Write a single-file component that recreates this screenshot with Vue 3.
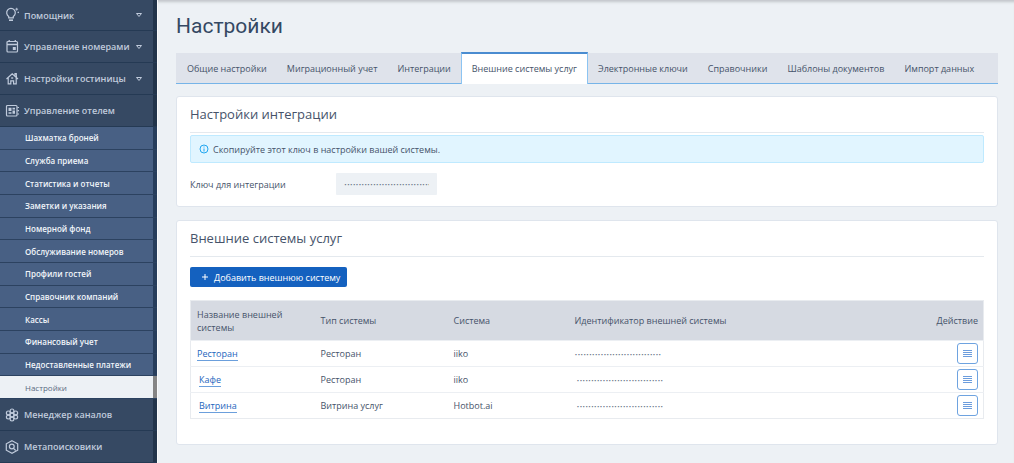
<script setup>
const topItems = [
  { label: 'Помощник', icon: 'bulb', arrow: true },
  { label: 'Управление номерами', icon: 'calendar', arrow: true },
  { label: 'Настройки гостиницы', icon: 'house', arrow: true },
  { label: 'Управление отелем', icon: 'hotel', arrow: false },
]
const subItems = [
  'Шахматка броней', 'Служба приема', 'Статистика и отчеты', 'Заметки и указания',
  'Номерной фонд', 'Обслуживание номеров', 'Профили гостей', 'Справочник компаний',
  'Кассы', 'Финансовый учет', 'Недоставленные платежи', 'Настройки',
]
const tabs = [
  'Общие настройки', 'Миграционный учет', 'Интеграции', 'Внешние системы услуг',
  'Электронные ключи', 'Справочники', 'Шаблоны документов', 'Импорт данных',
]
const activeTab = 'Внешние системы услуг'
const mask = '·'.repeat(30)
const rows = [
  { name: 'Ресторан', type: 'Ресторан', system: 'iiko', inset: false },
  { name: 'Кафе', type: 'Ресторан', system: 'iiko', inset: true },
  { name: 'Витрина', type: 'Витрина услуг', system: 'Hotbot.ai', inset: true },
]
</script>

<template>
  <div class="page">
    <nav class="sidebar">
      <button v-for="item in topItems" :key="item.label" type="button" class="item">
        <svg v-if="item.icon === 'bulb'" class="icon" viewBox="0 0 16 16">
          <path d="M4.700 10.800v-1.400a4.300 4.300 0 1 1 4.600 0v1.400z" />
          <path d="M5 13.200h4" stroke-width="1.600" />
          <path d="M12.700 .8v2.800M11.300 2.200h2.800M14.300 4.700v1.400M13.600 5.400H15" stroke-width=".9" />
        </svg>
        <svg v-else-if="item.icon === 'calendar'" class="icon" viewBox="0 0 16 16">
          <rect x="3" y="2.500" width="10.500" height="10.500" rx="1" />
          <path d="M3 5.500h10.500M5.200 1V3M11.300 1V3" stroke-width="1.300" />
          <path d="M8.800 8h3v3h-3z" class="solid" />
        </svg>
        <svg v-else-if="item.icon === 'house'" class="icon" viewBox="0 0 16 16">
          <path d="M2.500 8 8.200 2.700 14 8M4.200 7v5.800h2.600v-3h2.800v3h2.600V7M11 4.500v-2h1.300V6" />
          <path d="M7.200 6.300h2v1.400h-2z" class="solid" />
        </svg>
        <svg v-else class="icon" viewBox="0 0 16 16">
          <rect x="2.500" y="2.500" width="10.500" height="10.500" rx="1" />
          <path d="M4.500 4.700h3V8h-3zM8.500 4.700H11v1.800H8.500zM4.500 9.200h3v1.600h-3zM8.500 7.500H11v3.300H8.500z" class="solid" />
          <path d="M13.500 4.500H15M13.500 7.700H15M13.500 11H15" />
        </svg>
        <span class="label">{{ item.label }}</span>
        <svg v-if="item.arrow" class="arrow" viewBox="0 0 8 6"><path d="M1.500 1.500h5L4 4.500z" /></svg>
      </button>

      <div class="sub">
        <a v-for="label in subItems" :key="label" href="#" :class="{ current: label === 'Настройки' }">{{ label }}</a>
      </div>

      <button type="button" class="item">
        <svg class="icon" viewBox="0 0 16 16">
          <circle cx="8" cy="8" r="1.900" /><circle cx="8" cy="3.900" r="1.900" /><circle cx="8" cy="12.100" r="1.900" />
          <circle cx="4.300" cy="5.900" r="1.900" /><circle cx="11.700" cy="5.900" r="1.900" />
          <circle cx="4.300" cy="10.100" r="1.900" /><circle cx="11.700" cy="10.100" r="1.900" />
        </svg>
        <span class="label">Менеджер каналов</span>
      </button>
      <button type="button" class="item">
        <svg class="icon" viewBox="0 0 16 16">
          <path d="M8 1.700 13.700 4.800v6.400L8 14.300l-5.700-3.100V4.800z" />
          <circle cx="7.800" cy="7.500" r="2.400" /><path d="m9.500 9.300 2.200 2.200" />
        </svg>
        <span class="label">Метапоисковики</span>
      </button>
    </nav>

    <main class="main">
      <h1>Настройки</h1>
      <div class="tabs" role="tablist">
        <button v-for="tab in tabs" :key="tab" type="button" role="tab" class="tab"
          :class="{ active: tab === activeTab }" :aria-selected="tab === activeTab">{{ tab }}</button>
      </div>

      <section class="card">
        <h2>Настройки интеграции</h2>
        <div class="alert">
          <svg viewBox="0 0 10 10"><circle cx="5" cy="5" r="4" /><path d="M5 4.500v3M5 2.500v1" /></svg>
          <span>Скопируйте этот ключ в настройки вашей системы.</span>
        </div>
        <div class="field">
          <label for="key">Ключ для интеграции</label>
          <input id="key" type="text" readonly :value="mask">
        </div>
      </section>

      <section class="card systems">
        <h2>Внешние системы услуг</h2>
        <button type="button" class="add">
          <svg viewBox="0 0 8 8"><path d="M4 1v6M1 4h6" /></svg>
          <span>Добавить внешнюю систему</span>
        </button>
        <table>
          <colgroup><col class="c-name"><col class="c-type"><col class="c-system"><col><col class="c-action"></colgroup>
          <thead>
            <tr>
              <th>Название внешней системы</th><th>Тип системы</th><th>Система</th>
              <th>Идентификатор внешней системы</th><th class="action">Действие</th>
            </tr>
          </thead>
          <tbody>
            <tr v-for="row in rows" :key="row.name" :class="{ inset: row.inset }">
              <td class="name"><a href="#">{{ row.name }}</a></td>
              <td>{{ row.type }}</td>
              <td>{{ row.system }}</td>
              <td class="ident">{{ mask }}</td>
              <td class="action">
                <button type="button" class="menu" :aria-label="'Действия: ' + row.name">
                  <svg viewBox="0 0 9 9"><path d="M0 1.500h9M0 3.500h9M0 5.500h9M0 7.500h9" /></svg>
                </button>
              </td>
            </tr>
          </tbody>
        </table>
      </section>
    </main>
  </div>
</template>

<style>
body { background: #edf1f5; }
</style>

<style scoped>
* { box-sizing: border-box; }
.page {
  display: grid;
  grid-template-columns: 157px 1fr;
  min-height: 100vh;
  font-family: "Open Sans", "Noto Sans", sans-serif;
  font-size: 9px;
  line-height: 13px;
  color: #46536a;
}
button, input { font: inherit; color: inherit; margin: 0; }
svg { fill: none; stroke: currentColor; flex: none; }
.solid { fill: currentColor; stroke: none; }

.sidebar {
  background: linear-gradient(to left, #22344a 4px, #364963 4px);
  color: #c0cbdc;
}
.item {
  display: flex;
  align-items: center;
  width: 100%;
  height: 32px;
  padding: 0 14px 0 4px;
  gap: 4px;
  border: 0;
  border-bottom: 1px solid #253a54;
  background: none;
  font-weight: 600;
  text-align: left;
  white-space: nowrap;
}
.item:first-child { height: 31px; }
.icon { width: 16px; height: 16px; stroke-width: 1.2; }
.label { flex: 1; }
.arrow { width: 8px; height: 6px; }
.sub {
  display: grid;
  grid-auto-rows: 1fr;
  min-height: 272px;
  background: linear-gradient(to left, #273d5b 4px, #486084 4px);
}
.sub a {
  display: flex;
  align-items: center;
  padding-left: 25px;
  border-bottom: 1px solid #2c4260;
  color: #f1f5fa;
  font-size: 8px;
  font-weight: 600;
  text-decoration: none;
}
.sub a.current {
  background: linear-gradient(to left, #858585 4px, #edf1f5 4px);
  color: #5a6a82;
  font-weight: 400;
}

.main {
  padding: 13px 16px 18px 18px;
  border-left: 1px solid #fafbfc;
  box-shadow: inset 0 4px 3px -2px #c2c6ca;
  min-width: 0;
}
h1 {
  margin: 0 0 14px;
  font: 400 21px/26px Roboto, sans-serif;
  color: #344863;
}
.tabs {
  display: flex;
  align-items: flex-end;
  height: 31px;
  padding-left: 1px;
  background: #dfe3eb;
  border-bottom: 1px solid #76b4e8;
}
.tab {
  flex: none;
  height: 30px;
  padding: 0 10px;
  border: 0;
  background: none;
  white-space: nowrap;
}
.tab.active {
  height: 32px;
  margin-bottom: -1px;
  padding-bottom: 2px;
  background: #fff;
  border: 1px solid #8cc4f2;
  border-top: 2px solid #4a8cd0;
  border-bottom: 0;
}
.card {
  margin-top: 12px;
  padding: 0 13px 11px;
  border: 1px solid #dfe5ed;
  border-radius: 3px;
  background: #fff;
}
h2 {
  margin: 0;
  padding: 9px 0 10px;
  border-bottom: 1px solid #e4e9ee;
  font-size: 13px;
  line-height: 16px;
  font-weight: 400;
}
.alert {
  display: flex;
  align-items: center;
  gap: 4px;
  height: 28px;
  margin-top: 2px;
  padding: 0 8px;
  border: 1px solid #bfeaff;
  border-radius: 2px;
  background: #e1f5ff;
}
.alert svg { width: 10px; height: 10px; color: #22a7f0; }
.field { display: flex; align-items: center; margin-top: 10px; }
.field label { width: 146px; }
.field input {
  width: 101px;
  height: 22px;
  padding: 0 8px 2px;
  border: 0;
  border-radius: 1px;
  background: #edf1f5;
}
.field input, .ident { font-size: 11px; color: #6b7688; }
.add {
  display: flex;
  align-items: center;
  gap: 5px;
  height: 20px;
  margin: 10px 0 13px;
  padding: 0 7px 0 11px;
  border: 0;
  border-radius: 2px;
  background: #1461bf;
  color: #fff;
  font-weight: 500;
}
.add svg { width: 8px; height: 8px; }
.systems { margin-top: 13px; padding-bottom: 25px; }
table {
  width: 100%;
  table-layout: fixed;
  border-collapse: collapse;
  border: 1px solid #e8ebef;
}
.c-name { width: 124px; }
.c-type { width: 133px; }
.c-system { width: 121px; }
.c-action { width: 80px; }
thead { background: #d6dae2; }
th, td { padding: 0 6px; font-weight: 400; text-align: left; }
th { height: 40px; }
th.action, td.action { padding-right: 5px; text-align: right; }
td { height: 26px; border-top: 1px solid #eceff3; }
.name a { color: #1d65bd; text-decoration: none; border-bottom: 1px solid #6b9fdc; }
.inset .name, .inset .ident { padding-left: 8px; }
.menu {
  display: inline-flex;
  align-items: center;
  justify-content: center;
  width: 21px;
  height: 21px;
  padding: 0;
  border: 1px solid #6ea3e0;
  border-radius: 3px;
  background: #fff;
  color: #6c9ddd;
  vertical-align: middle;
}
.menu svg { width: 9px; height: 9px; }
</style>
